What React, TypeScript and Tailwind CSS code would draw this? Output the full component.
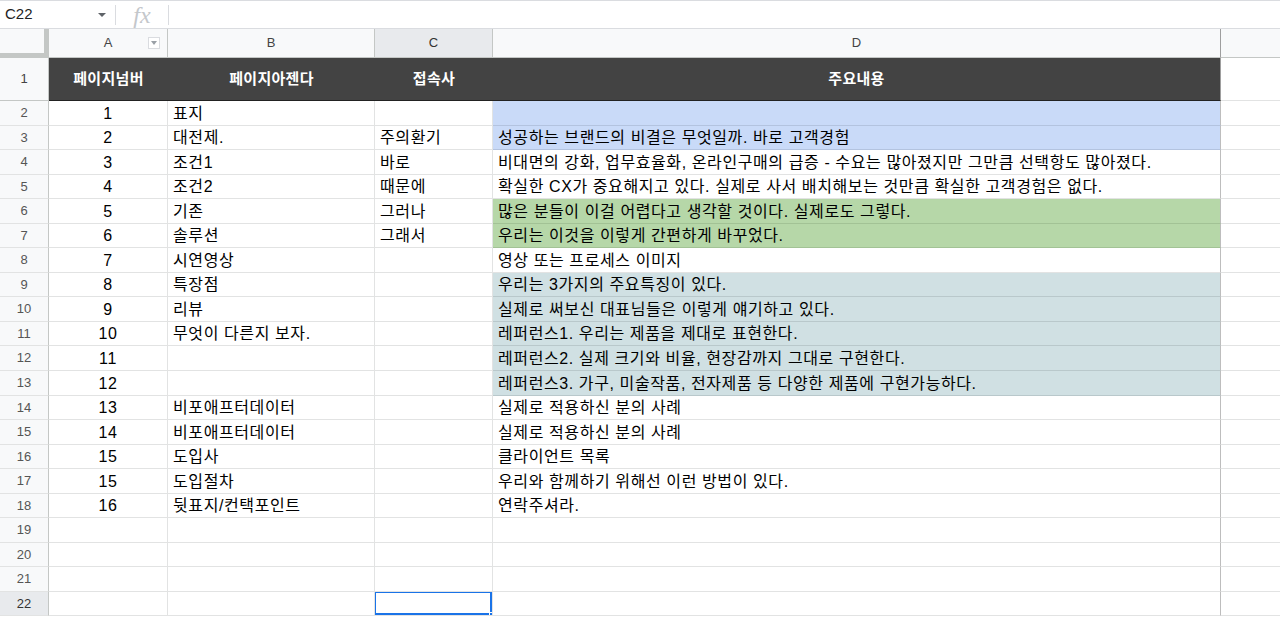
type Fill = 'blue' | 'green' | 'teal' | undefined;

type SheetRow = {
  a: string;
  b: string;
  c: string;
  d: string;
  fill?: Fill;
};

const rows: SheetRow[] = [
  { a: '1', b: '표지', c: '', d: '', fill: 'blue' },
  { a: '2', b: '대전제.', c: '주의환기', d: '성공하는 브랜드의 비결은 무엇일까. 바로 고객경험', fill: 'blue' },
  { a: '3', b: '조건1', c: '바로', d: '비대면의 강화, 업무효율화, 온라인구매의 급증 - 수요는 많아졌지만 그만큼 선택항도 많아졌다.' },
  { a: '4', b: '조건2', c: '때문에', d: '확실한 CX가 중요해지고 있다. 실제로 사서 배치해보는 것만큼 확실한 고객경험은 없다.' },
  { a: '5', b: '기존', c: '그러나', d: '많은 분들이 이걸 어렵다고 생각할 것이다. 실제로도 그렇다.', fill: 'green' },
  { a: '6', b: '솔루션', c: '그래서', d: '우리는 이것을 이렇게 간편하게 바꾸었다.', fill: 'green' },
  { a: '7', b: '시연영상', c: '', d: '영상 또는 프로세스 이미지' },
  { a: '8', b: '특장점', c: '', d: '우리는 3가지의 주요특징이 있다.', fill: 'teal' },
  { a: '9', b: '리뷰', c: '', d: '실제로 써보신 대표님들은 이렇게 얘기하고 있다.', fill: 'teal' },
  { a: '10', b: '무엇이 다른지 보자.', c: '', d: '레퍼런스1. 우리는 제품을 제대로 표현한다.', fill: 'teal' },
  { a: '11', b: '', c: '', d: '레퍼런스2. 실제 크기와 비율, 현장감까지 그대로 구현한다.', fill: 'teal' },
  { a: '12', b: '', c: '', d: '레퍼런스3. 가구, 미술작품, 전자제품 등 다양한 제품에 구현가능하다.', fill: 'teal' },
  { a: '13', b: '비포애프터데이터', c: '', d: '실제로 적용하신 분의 사례' },
  { a: '14', b: '비포애프터데이터', c: '', d: '실제로 적용하신 분의 사례' },
  { a: '15', b: '도입사', c: '', d: '클라이언트 목록' },
  { a: '15', b: '도입절차', c: '', d: '우리와 함께하기 위해선 이런 방법이 있다.' },
  { a: '16', b: '뒷표지/컨택포인트', c: '', d: '연락주셔라.' },
  { a: '', b: '', c: '', d: '' },
  { a: '', b: '', c: '', d: '' },
  { a: '', b: '', c: '', d: '' },
  { a: '', b: '', c: '', d: '' },
];

const fillClass: Record<string, string> = {
  blue: 'bg-[#c9daf8] border-b-[#b3c3df]',
  green: 'bg-[#b6d7a8] border-b-[#a2c295]',
  teal: 'bg-[#d0e0e3] border-b-[#b9c8cb]',
};

function ColumnHeader() {
  return (
    <div className="flex h-[29px] bg-[#f8f9fa] text-[13px] text-[#444]">
      <div className="w-[49px] shrink-0 border-r-[5px] border-b-[5px] border-[#c4c7c5] bg-[#f8f9fa]" />
      <div className="relative w-[119px] shrink-0 flex items-center justify-center border-r border-b border-[#c4c7c5]">
        A
        <span className="absolute right-[7px] top-[8px] flex h-[12px] w-[12px] items-center justify-center border border-[#dadce0] bg-white">
          <span className="h-0 w-0 border-x-[3px] border-t-[4px] border-x-transparent border-t-[#9aa0a6]" />
        </span>
      </div>
      <div className="w-[207px] shrink-0 flex items-center justify-center border-r border-b border-[#c4c7c5]">B</div>
      <div className="w-[118px] shrink-0 flex items-center justify-center border-r border-b border-[#c4c7c5] bg-[#e8eaed] text-[#333]">C</div>
      <div className="w-[728px] shrink-0 flex items-center justify-center border-r border-b border-r-[#9e9e9e] border-b-[#c4c7c5]">D</div>
      <div className="flex-1 border-b border-[#c4c7c5]" />
    </div>
  );
}

function TitleRow() {
  const head = 'shrink-0 flex items-center justify-center bg-[#434343] text-white font-bold text-[15px] tracking-[0.3px] border-b border-b-[#222]';
  return (
    <div className="flex h-[43px]">
      <div className="w-[49px] shrink-0 flex items-center justify-center border-r border-b border-[#c4c7c5] bg-[#f8f9fa] text-[13px] text-[#444]">1</div>
      <div className={`${head} w-[119px]`}>페이지넘버</div>
      <div className={`${head} w-[207px]`}>페이지아젠다</div>
      <div className={`${head} w-[118px]`}>접속사</div>
      <div className={`${head} w-[728px] border-r border-r-[#9e9e9e]`}>주요내용</div>
      <div className="flex-1 border-b border-[#e2e3e3]" />
    </div>
  );
}

function DataRow({ row, index }: { row: SheetRow; index: number }) {
  const num = index + 2;
  const selected = num === 22;
  const cell =
    'shrink-0 flex items-end pb-[1px] leading-[20px] tracking-[0.6px] border-r border-b border-[#e2e3e3] whitespace-nowrap overflow-hidden';
  return (
    <div className="flex h-[24.55px] text-[16px] text-black">
      <div
        className={`w-[49px] shrink-0 flex items-center justify-center border-r border-b border-r-[#c4c7c5] border-b-[#e2e3e3] text-[13px] ${
          selected ? 'bg-[#e8eaed] text-[#333]' : 'bg-[#f8f9fa] text-[#555]'
        }`}
      >
        {num}
      </div>
      <div className={`${cell} w-[119px] justify-center`}>{row.a}</div>
      <div className={`${cell} w-[207px] pl-[5px]`}>{row.b}</div>
      <div className={`${cell} relative w-[118px] pl-[5px]`}>
        {row.c}
        {selected && (
          <>
            <span className="pointer-events-none absolute -left-px -top-px h-[calc(100%+1px)] w-[calc(100%+1px)] border-2 border-[#1a73e8]" />
            <span className="absolute -right-[4px] -bottom-[4px] h-[7px] w-[7px] border border-white bg-[#1a73e8]" />
          </>
        )}
      </div>
      <div
        className={`${cell} w-[728px] pl-[5px] border-r-[#bdbdbd] ${row.fill ? fillClass[row.fill] : ''}`}
      >
        {row.d}
      </div>
      <div className="flex-1 border-b border-[#e2e3e3]" />
    </div>
  );
}

export default function App() {
  return (
    <div className="h-[617px] w-[1280px] overflow-hidden bg-white font-['Liberation_Sans','Noto_Sans_CJK_KR',sans-serif]">
      {/* name box + formula input */}
      <div className="flex h-[29px] items-center border-y border-[#dadce0] bg-white">
        <div className="flex w-[115px] items-center justify-between pl-[5px] pr-[9px] text-[15px] text-[#222]">
          <span>C22</span>
          <span className="h-0 w-0 border-x-[4px] border-t-[4px] border-x-transparent border-t-[#5f6368]" />
        </div>
        <div className="h-[20px] w-px bg-[#dadce0]" />
        <div className="flex w-[52px] items-center justify-center font-['Liberation_Serif',serif] text-[24px] italic text-[#c4c7cb]">
          fx
        </div>
        <div className="h-[20px] w-px bg-[#dadce0]" />
        <div className="flex-1" />
      </div>

      <ColumnHeader />
      <TitleRow />
      {rows.map((row, i) => (
        <DataRow key={i} row={row} index={i} />
      ))}
    </div>
  );
}
